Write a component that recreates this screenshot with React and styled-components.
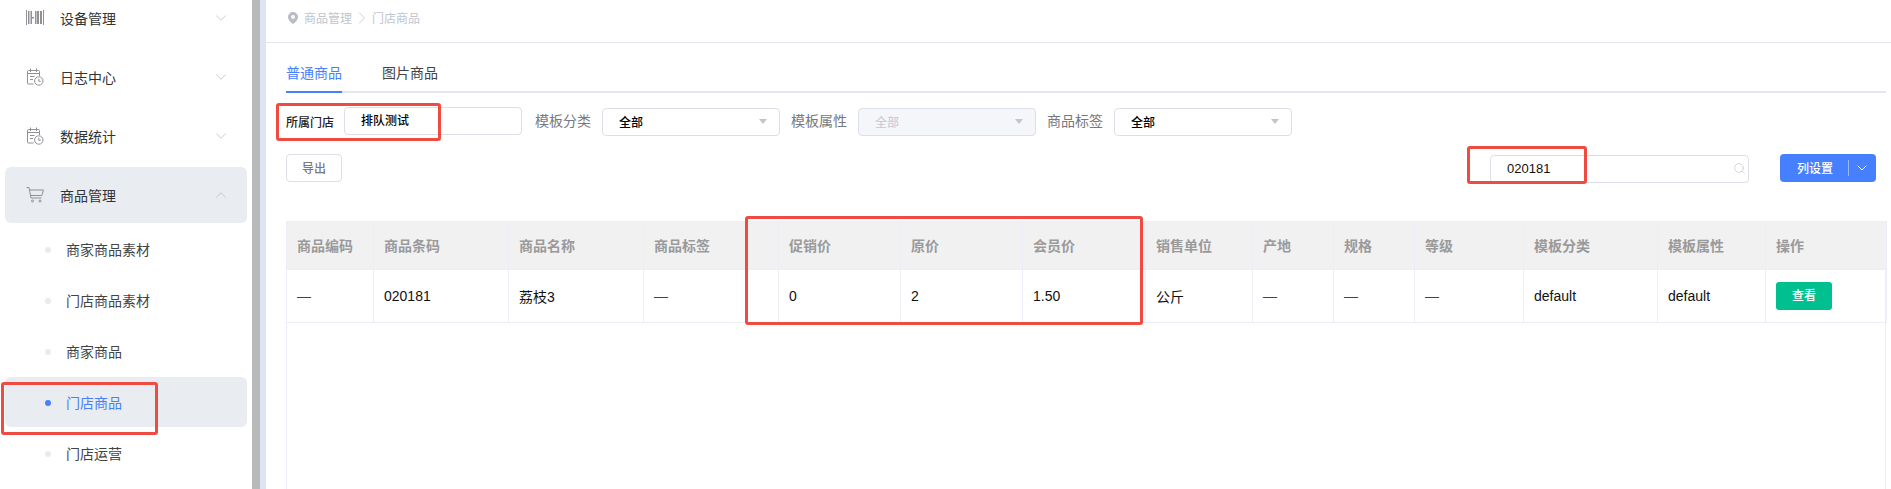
import React from 'react';
import styled, { createGlobalStyle } from 'styled-components';
import { ChevronDown, ChevronRight, ChevronUp, Search } from 'lucide-react';

const GlobalStyle = createGlobalStyle`
  html, body {
    margin: 0;
    padding: 0;
    background: #fff;
    overflow: hidden;
  }
  body {
    font-family: "Liberation Sans", "Noto Sans CJK SC", sans-serif;
    font-size: 14px;
    color: #333;
  }
`;

const Page = styled.div`
  position: relative;
  display: flex;
  width: 1891px;
  height: 489px;
  overflow: hidden;
`;

const Sidebar = styled.aside`
  flex: none;
  width: 252px;
  overflow: hidden;
`;

const Nav = styled.nav`
  margin-top: -10px;
`;

const NavItem = styled.div`
  display: flex;
  align-items: center;
  gap: 16px;
  height: 56px;
  margin: 0 5px 3px;
  padding: 0 21px;
  border-radius: 6px;
  background: ${(p) => (p.$open ? '#e9ecf0' : 'transparent')};
  color: #333;
  font-size: 14px;
  line-height: 20px;

  > svg:last-child {
    margin-left: auto;
    margin-right: -4px;
    color: #b8bbc2;
  }
`;

const NavLabel = styled.span`
  padding-top: 2px;
`;

const NavIcon = styled.span`
  display: flex;
  flex: none;
  width: 18px;
  height: 18px;
  color: #8f9196;
`;

const SubList = styled.div`
  margin-top: -2px;
`;

const SubItem = styled.div`
  display: flex;
  align-items: center;
  gap: 15px;
  box-sizing: border-box;
  height: 50px;
  margin: 0 5px 1px;
  padding: 2px 0 0 40px;
  border-radius: 6px;
  background: ${(p) => (p.$active ? '#e9ecf0' : 'transparent')};
  color: ${(p) => (p.$active ? '#4680ff' : '#444')};
  font-size: 14px;
  line-height: 20px;
`;

const Dot = styled.i`
  flex: none;
  width: 6px;
  height: 6px;
  border-radius: 50%;
  background: ${(p) => (p.$active ? '#4680ff' : '#e8ebf0')};
`;

const ScrollThumb = styled.div`
  flex: none;
  width: 8px;
  background: #b8b9bb;
`;

const ScrollGutter = styled.div`
  flex: none;
  width: 6px;
  background: #dfe4f3;
`;

const Main = styled.main`
  display: flex;
  flex: 1;
  flex-direction: column;
  min-width: 0;
`;

const Breadcrumb = styled.div`
  display: flex;
  flex: none;
  align-items: center;
  box-sizing: border-box;
  height: 43px;
  padding: 0 0 4px 22px;
  border-bottom: 1px solid #e3e7f2;
  color: #c1c5ce;
  font-size: 12px;
  line-height: 16px;

  > svg:first-child {
    margin: -3px 6px 0 0;
  }
`;

const CrumbSep = styled.span`
  display: flex;
  margin-top: -2px;
`;

const Content = styled.div`
  display: flex;
  flex: 1;
  flex-direction: column;
  min-height: 0;
  padding: 0 5px 0 20px;
`;

const TabBar = styled.div`
  display: flex;
  flex: none;
  align-items: flex-end;
  gap: 40px;
  box-sizing: border-box;
  height: 50px;
  border-bottom: 2px solid #e4e7ed;
`;

const Tab = styled.div`
  margin-bottom: -2px;
  padding-bottom: 8px;
  border-bottom: 2px solid ${(p) => (p.$active ? '#4680ff' : 'transparent')};
  color: ${(p) => (p.$active ? '#4680ff' : '#444')};
  font-size: 14px;
  line-height: 20px;
`;

const FilterRow = styled.div`
  display: flex;
  flex: none;
  align-items: flex-start;
  margin-top: 14px;
`;

const StoreLabel = styled.label`
  flex: none;
  width: 58px;
  height: 28px;
  color: #222;
  font-size: 12px;
  font-weight: 500;
  line-height: 32px;
`;

const FilterLabel = styled.label`
  flex: none;
  margin: 1px 11px 0 ${(p) => p.$gap}px;
  color: #77797e;
  font-size: 14px;
  line-height: 26px;
`;

const Field = styled.div`
  display: flex;
  flex: none;
  align-items: center;
  justify-content: space-between;
  box-sizing: border-box;
  width: 178px;
  height: 28px;
  margin-top: ${(p) => (p.$flush ? 0 : 1)}px;
  padding: 0 12px ${(p) => (p.$flush ? 4 : 2)}px 16px;
  border: 1px solid #dcdfe8;
  border-radius: 4px;
  background: ${(p) => (p.$disabled ? '#f4f6fa' : '#fff')};
  color: ${(p) => (p.$disabled ? '#c4c7ce' : '#000')};
  font-size: 12px;
  font-weight: ${(p) => (p.$disabled ? 400 : 500)};
`;

const Caret = styled.i`
  width: 0;
  height: 0;
  border-top: 5px solid #c0c4cc;
  border-left: 4px solid transparent;
  border-right: 4px solid transparent;
`;

const Toolbar = styled.div`
  display: flex;
  flex: none;
  align-items: flex-start;
  margin: 18px 10px 38px 0;
`;

const ExportButton = styled.button`
  box-sizing: border-box;
  width: 56px;
  height: 28px;
  padding: 0 0 2px;
  border: 1px solid #dcdfe8;
  border-radius: 4px;
  background: #fff;
  color: #77797e;
  font: inherit;
  font-size: 12px;
  font-weight: 500;
`;

const SearchField = styled(Field)`
  width: 259px;
  margin-left: auto;
  padding-right: 2px;
  font-weight: 400;
  font-size: 13px;
  color: #111;

  svg {
    color: #c0c4cc;
  }
`;

const ColumnButton = styled.div`
  display: flex;
  align-items: center;
  box-sizing: border-box;
  width: 96px;
  height: 28px;
  margin-left: 31px;
  padding-left: 17px;
  border-radius: 4px;
  background: #4680ff;
  color: #fff;
  font-size: 12px;
  font-weight: 500;
`;

const ButtonLabel = styled.span`
  padding-bottom: 2px;
`;

const ButtonDivider = styled.i`
  width: 1px;
  height: 16px;
  margin: 0 5px 0 15px;
  background: rgba(255, 255, 255, 0.45);
`;

const TableWrap = styled.div`
  flex: 1;
  min-height: 0;
  border-left: 1px solid #eceef5;
  border-right: 1px solid #eceef5;
`;

const Table = styled.table`
  width: 1600px;
  margin-left: -1px;
  border-collapse: collapse;
  table-layout: fixed;
`;

const Th = styled.th`
  box-sizing: border-box;
  height: 48px;
  padding: 0 10px 1px;
  border: 1px solid #eceef5;
  background: #f1f1f2;
  color: #9a9a9a;
  font-size: 14px;
  font-weight: 600;
  text-align: left;
  white-space: nowrap;
`;

const Td = styled.td`
  box-sizing: border-box;
  height: 53px;
  padding: 0 10px 1px;
  border: 1px solid #eceef5;
  color: ${(p) => (p.$dash ? '#444' : '#111')};
  font-size: 14px;
  white-space: nowrap;
`;

const ViewButton = styled.button`
  display: block;
  width: 56px;
  height: 28px;
  padding: 0 0 2px;
  border: 0;
  border-radius: 3px;
  background: #00c08f;
  color: #fff;
  font: inherit;
  font-size: 12px;
  font-weight: 500;
`;

// red marks drawn on top of the screenshot
const Mark = styled.div`
  position: absolute;
  left: ${(p) => p.$x}px;
  top: ${(p) => p.$y}px;
  box-sizing: border-box;
  width: ${(p) => p.$w}px;
  height: ${(p) => p.$h}px;
  border: 3px solid #ef4b40;
  border-radius: 3px;
  pointer-events: none;
`;

const BarcodeIcon = () => (
  <svg width="18" height="18" viewBox="0 0 18 18" fill="currentColor">
    <rect x="0" y="1" width="1" height="15" />
    <rect x="2" y="2" width="1.5" height="13" />
    <rect x="4.5" y="2" width="1.5" height="13" />
    <rect x="6" y="8" width="2" height="1.5" />
    <rect x="9" y="2" width="1" height="13" />
    <rect x="10.5" y="2" width="2.5" height="13" />
    <rect x="14" y="2" width="2" height="13" />
    <rect x="17" y="1" width="1" height="15" />
  </svg>
);

const LedgerIcon = () => (
  <svg width="18" height="18" viewBox="0 0 18 18" fill="none" stroke="currentColor" strokeWidth="1">
    <path d="M7.5 16H2.5a1 1 0 0 1-1-1V3.5a1 1 0 0 1 1-1h10a1 1 0 0 1 1 1V8" />
    <path d="M4.5 0.5v3.5M10.5 0.5v3.5M1.5 5.5h12M4 8.5h4.500M4 11.500h3" />
    <circle cx="12.800" cy="13" r="4.200" fill="#fff" />
    <path d="M12.800 10.800V13.300h2" />
  </svg>
);

const CartIcon = () => (
  <svg width="18" height="18" viewBox="0 0 18 18" fill="none" stroke="currentColor" strokeWidth="1">
    <path d="M0.500 1.500h2.500l2 10.500h10.500" />
    <path d="M3.400 4h14l-1.500 5.500H4.400" />
    <circle cx="6.500" cy="15" r="1" />
    <circle cx="14" cy="15" r="1" />
  </svg>
);

const PinIcon = () => (
  <svg width="10" height="12" viewBox="0 0 10 12">
    <path
      fill="#b7bcc6"
      fillRule="evenodd"
      d="M5 0a5 5 0 0 1 5 5c0 2.800-3 5.600-5 7-2-1.400-5-4.200-5-7a5 5 0 0 1 5-5zm0 3a2 2 0 1 0 0 4 2 2 0 0 0 0-4z"
    />
  </svg>
);

const columns = [
  { title: '商品编码', width: 87, value: '—', dash: true },
  { title: '商品条码', width: 135, value: '020181' },
  { title: '商品名称', width: 135, value: '荔枝3' },
  { title: '商品标签', width: 135, value: '—', dash: true },
  { title: '促销价', width: 122, value: '0' },
  { title: '原价', width: 122, value: '2' },
  { title: '会员价', width: 123, value: '1.50' },
  { title: '销售单位', width: 107, value: '公斤' },
  { title: '产地', width: 81, value: '—', dash: true },
  { title: '规格', width: 81, value: '—', dash: true },
  { title: '等级', width: 109, value: '—', dash: true },
  { title: '模板分类', width: 134, value: 'default' },
  { title: '模板属性', width: 108, value: 'default' },
  { title: '操作', width: 121, action: true },
];

const subItems = ['商家商品素材', '门店商品素材', '商家商品', '门店商品', '门店运营'];

export default function App() {
  return (
    <Page>
      <GlobalStyle />
      <Sidebar>
        <Nav>
          <NavItem>
            <NavIcon><BarcodeIcon /></NavIcon>
            <NavLabel>设备管理</NavLabel>
            <ChevronDown size={18} strokeWidth={1} />
          </NavItem>
          <NavItem>
            <NavIcon><LedgerIcon /></NavIcon>
            <NavLabel>日志中心</NavLabel>
            <ChevronDown size={18} strokeWidth={1} />
          </NavItem>
          <NavItem>
            <NavIcon><LedgerIcon /></NavIcon>
            <NavLabel>数据统计</NavLabel>
            <ChevronDown size={18} strokeWidth={1} />
          </NavItem>
          <NavItem $open>
            <NavIcon><CartIcon /></NavIcon>
            <NavLabel>商品管理</NavLabel>
            <ChevronUp size={18} strokeWidth={1} />
          </NavItem>
          <SubList>
            {subItems.map((name) => (
              <SubItem key={name} $active={name === '门店商品'}>
                <Dot $active={name === '门店商品'} />
                {name}
              </SubItem>
            ))}
          </SubList>
        </Nav>
      </Sidebar>
      <ScrollThumb />
      <ScrollGutter />
      <Main>
        <Breadcrumb>
          <PinIcon />
          商品管理
          <CrumbSep><ChevronRight size={20} strokeWidth={1} /></CrumbSep>
          门店商品
        </Breadcrumb>
        <Content>
          <TabBar>
            <Tab $active>普通商品</Tab>
            <Tab>图片商品</Tab>
          </TabBar>
          <FilterRow>
            <StoreLabel>所属门店</StoreLabel>
            <Field $flush>排队测试</Field>
            <FilterLabel $gap={13}>模板分类</FilterLabel>
            <Field>全部<Caret /></Field>
            <FilterLabel $gap={11}>模板属性</FilterLabel>
            <Field $disabled>全部<Caret /></Field>
            <FilterLabel $gap={11}>商品标签</FilterLabel>
            <Field>全部<Caret /></Field>
          </FilterRow>
          <Toolbar>
            <ExportButton>导出</ExportButton>
            <SearchField>
              020181
              <Search size={13} strokeWidth={1.3} />
            </SearchField>
            <ColumnButton>
              <ButtonLabel>列设置</ButtonLabel>
              <ButtonDivider />
              <ChevronDown size={16} strokeWidth={1.4} />
            </ColumnButton>
          </Toolbar>
          <TableWrap>
            <Table>
              <colgroup>
                {columns.map((col) => (
                  <col key={col.title} width={col.width} />
                ))}
              </colgroup>
              <thead>
                <tr>
                  {columns.map((col) => (
                    <Th key={col.title}>{col.title}</Th>
                  ))}
                </tr>
              </thead>
              <tbody>
                <tr>
                  {columns.map((col) => (
                    <Td key={col.title} $dash={col.dash}>
                      {col.action ? <ViewButton>查看</ViewButton> : col.value}
                    </Td>
                  ))}
                </tr>
              </tbody>
            </Table>
          </TableWrap>
        </Content>
      </Main>
      <Mark $x={276} $y={103} $w={165} $h={38} />
      <Mark $x={1467} $y={146} $w={120} $h={38} />
      <Mark $x={745} $y={216} $w={398} $h={109} />
      <Mark $x={1} $y={382} $w={157} $h={53} />
    </Page>
  );
}
